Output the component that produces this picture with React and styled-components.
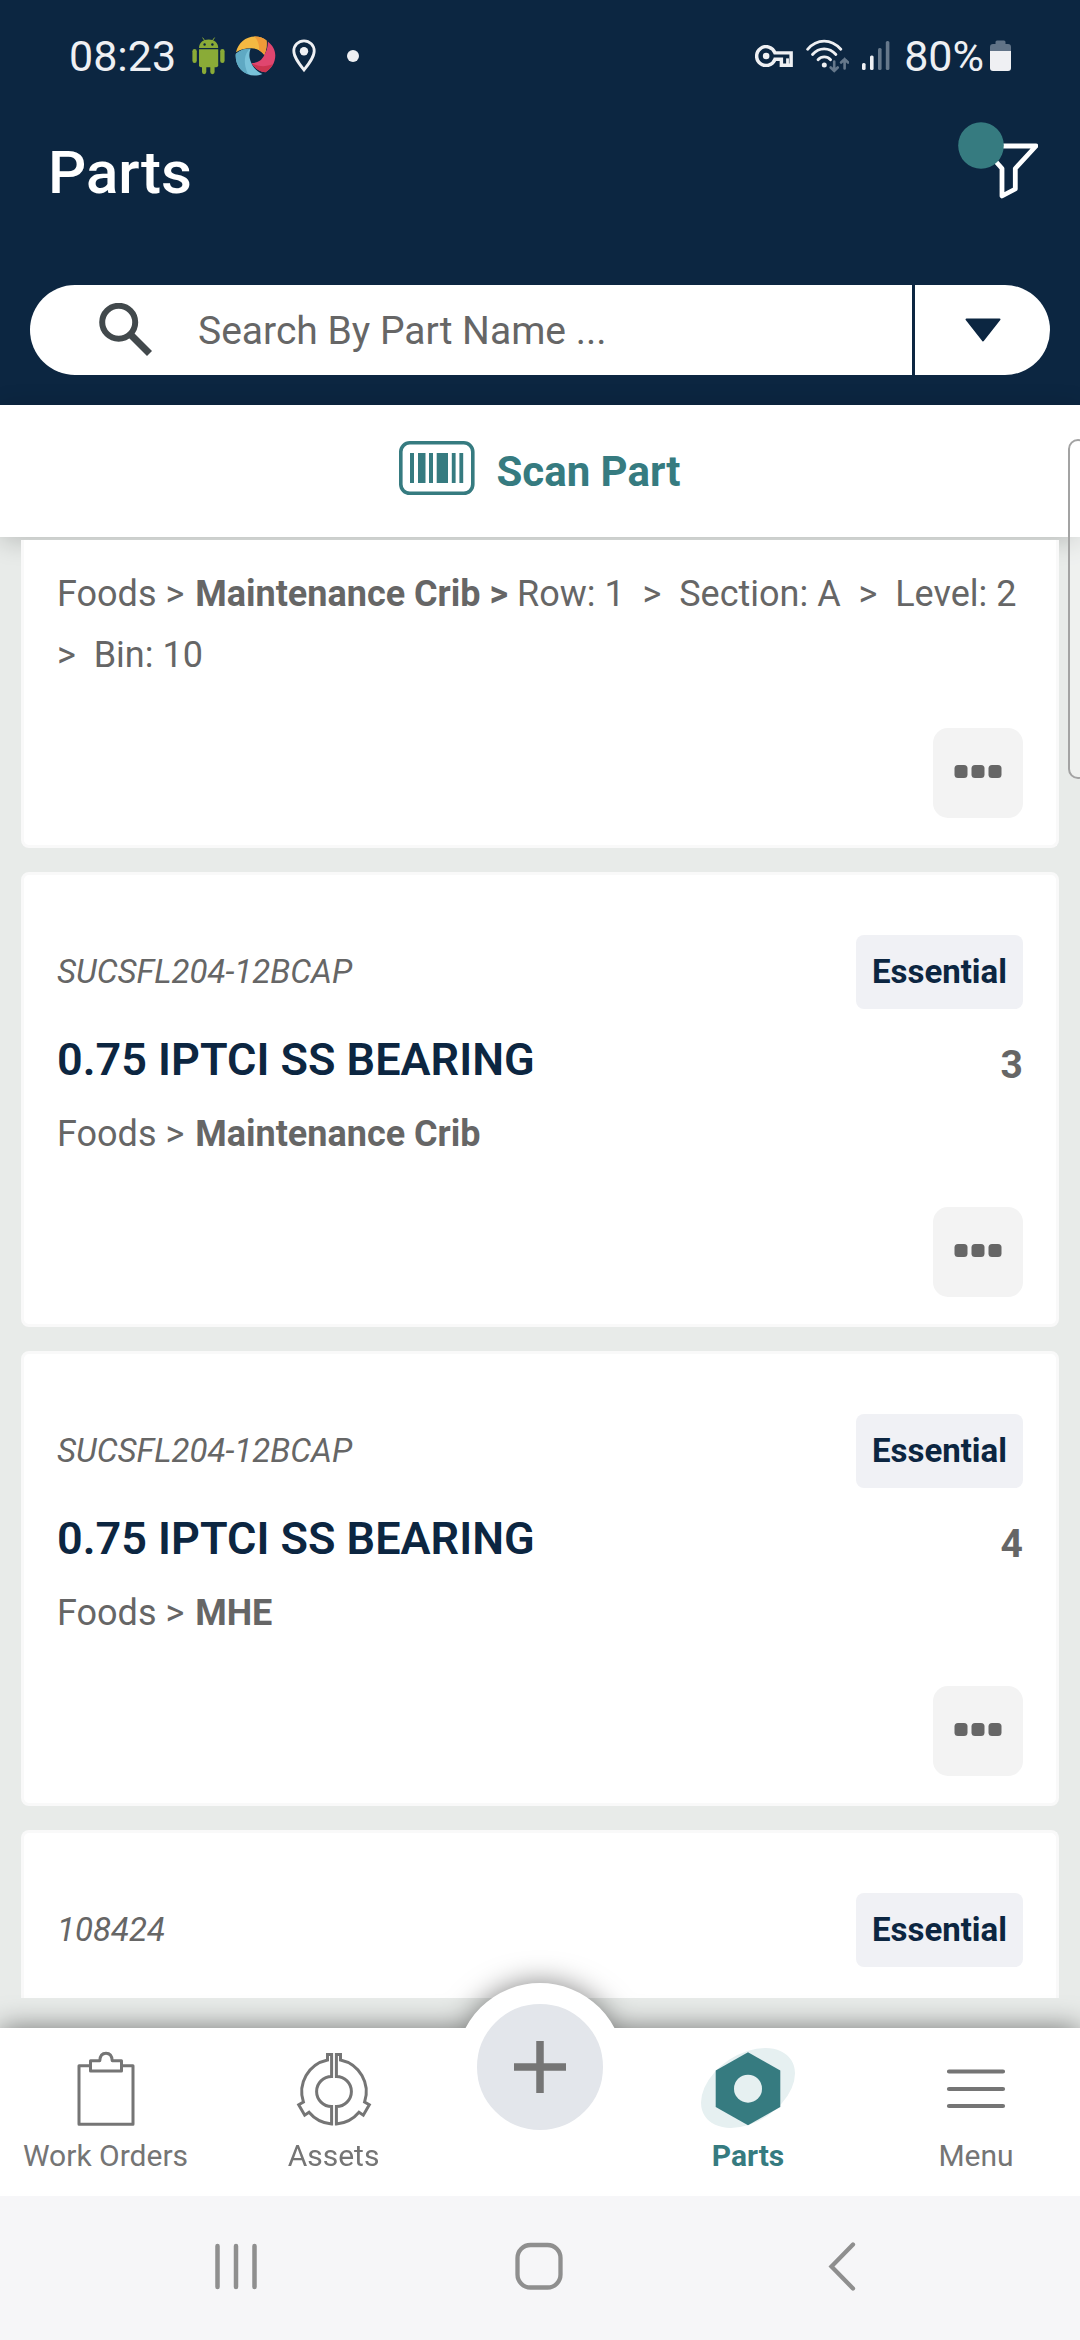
import React from "react";
import styled, { createGlobalStyle, css } from "styled-components";

const navy = "#0c2641";
const teal = "#367b80";
const grey = "#666666";
const tabGrey = "#757575";
const canvas = "#e8ebe9";

const GlobalStyle = createGlobalStyle`
  *, *::before, *::after { box-sizing: border-box; }
  body {
    margin: 0;
    background: ${canvas};
    font-family: Roboto, "Noto Sans", "Liberation Sans", sans-serif;
    color: ${grey};
  }
  button { padding: 0; border: 0; background: none; font: inherit; color: inherit; cursor: pointer; }
  svg { display: block; flex: none; }
`;

const Screen = styled.div`
  position: relative;
  display: flex;
  flex-direction: column;
  height: 100vh;
  overflow: hidden;
`;

const Header = styled.header`
  flex: none;
  padding-bottom: 30px;
  background: ${navy};
  color: #ffffff;
`;

const StatusBar = styled.div`
  display: flex;
  justify-content: space-between;
  height: 112px;
  padding: 0 69px;
  color: #eff0f3;
  font-size: 43px;
  line-height: 50px;
`;

const StatusGroup = styled.div`
  display: flex;
  align-items: center;
  gap: ${({ $gap }) => $gap}px;
`;

const TitleRow = styled.div`
  display: flex;
  align-items: flex-start;
  justify-content: space-between;
  padding: 10px 42px 10px 48px;
`;

const Title = styled.h1`
  margin: 0;
  font-size: 60px;
  font-weight: 500;
  line-height: 102px;
`;

const Search = styled.form`
  display: flex;
  align-items: center;
  height: 90px;
  margin: 51px 30px 0;
  padding-left: 69px;
  overflow: hidden;
  border-radius: 45px;
  background: #ffffff;
`;

const SearchInput = styled.input`
  flex: 1;
  min-width: 0;
  height: 90px;
  margin-left: 45px;
  padding: 2px 0 0;
  border: 0;
  outline: 0;
  background: transparent;
  font-family: inherit;
  font-size: 39px;
  color: ${grey};
  &::placeholder { color: ${grey}; opacity: 1; }
`;

const SearchMenu = styled.button`
  display: grid;
  place-items: center;
  align-self: stretch;
  width: 138px;
  && { border-left: 3px solid ${navy}; }
`;

const ScanBar = styled.div`
  position: relative;
  flex: none;
  background: #ffffff;
  box-shadow: 0 4px 24px rgba(0, 0, 0, 0.2);
`;

const ScanButton = styled.button`
  display: flex;
  align-items: center;
  justify-content: center;
  gap: 21px;
  width: 100%;
  height: 132px;
  && { color: ${teal}; font-size: 42px; font-weight: 700; }
`;

const List = styled.main`
  position: relative;
  flex: 1;
  display: flex;
  flex-direction: column;
  gap: 24px;
  min-height: 0;
  margin: 3px 21px 30px;
  overflow: hidden;
`;

const Card = styled.article`
  flex: none;
  padding: 60px 33px 27px;
  border: 3px solid #f9f9f9;
  border-radius: 8px;
  background: #ffffff;
  ${({ $edge }) => $edge === "top" && css`
    padding-top: 24px;
    border-top: 0;
    border-top-left-radius: 0;
    border-top-right-radius: 0;
  `}
  ${({ $edge }) => $edge === "bottom" && css`
    flex: 1;
    border-bottom: 0;
    border-bottom-left-radius: 0;
    border-bottom-right-radius: 0;
  `}
`;

const CardHead = styled.div`
  display: flex;
  align-items: center;
  justify-content: space-between;
`;

const PartNumber = styled.span`
  font-size: 33px;
  font-style: italic;
  line-height: 40px;
`;

const Badge = styled.span`
  padding: 0 16px;
  border-radius: 8px;
  background: #f0f1f5;
  color: ${navy};
  font-size: 33px;
  font-weight: 700;
  line-height: 74px;
`;

const CardTitleRow = styled.div`
  display: flex;
  align-items: flex-end;
  justify-content: space-between;
  margin: 21px 0 14px;
`;

const PartName = styled.h2`
  margin: 0;
  color: ${navy};
  font-size: 45px;
  font-weight: 600;
  line-height: 60px;
`;

const Count = styled.span`
  font-size: 39px;
  font-weight: 700;
  line-height: 50px;
`;

const Location = styled.p`
  margin: 0;
  font-size: 36px;
  line-height: 61px;
  b { margin-left: 2px; }
`;

const Step = styled.span`
  white-space: pre;
`;

const MoreButton = styled.button`
  display: grid;
  place-items: center;
  width: 90px;
  height: 90px;
  margin: 42px 0 0 auto;
  border-radius: 15px;
  && { background: #f3f3f3; }
`;

const TabBar = styled.nav`
  position: relative;
  flex: none;
  display: grid;
  grid-template-columns: 211fr 245fr 168px 248fr 208fr;
  height: 168px;
  background: #ffffff;
  filter: drop-shadow(0 0 14px rgba(0, 0, 0, 0.5));
`;

const Tab = styled.a`
  display: flex;
  flex-direction: column;
  align-items: center;
  gap: 10px;
  padding-top: 20px;
  color: ${({ $active }) => ($active ? teal : tabGrey)};
  font-size: 30px;
  font-weight: ${({ $active }) => ($active ? 700 : 400)};
  line-height: 36px;
  text-decoration: none;
`;

const AddButton = styled.button`
  display: grid;
  place-items: center;
  width: 168px;
  height: 168px;
  margin-top: -45px;
  border-radius: 50%;
  && { border: 21px solid #ffffff; background: #e3e6eb; }
`;

const SystemNav = styled.div`
  position: relative;
  flex: none;
  display: grid;
  grid-template-columns: repeat(3, 1fr);
  height: 144px;
  padding: 0 87px 4px 84px;
  background: #f6f6f8;
`;

const SystemButton = styled.button`
  display: grid;
  place-items: center;
`;

const EdgeHandle = styled.div`
  position: absolute;
  top: 439px;
  right: -8px;
  width: 20px;
  height: 340px;
  border: 2px solid #a3a3a3;
  border-radius: 14px;
  background: rgba(255, 255, 255, 0.3);
`;

const AndroidIcon = () => (
  <svg width="33" height="38" viewBox="0 0 33 38" fill="#8aab37" aria-hidden="true">
    <rect x="0.4" y="12" width="4.4" height="14" rx="2.2" />
    <rect x="28.2" y="12" width="4.4" height="14" rx="2.2" />
    <path d="M7 12.3h19.2v16a2 2 0 0 1-2 2H9a2 2 0 0 1-2-2z" />
    <path d="M10 28h4.3v7a2.1 2.1 0 0 1-4.3 0zM18.3 28h4.3v7a2.1 2.1 0 0 1-4.3 0z" />
    <path d="M7 11C7 6 11 2.6 16.6 2.6S26.200 6 26.200 11z" />
    <path d="M10.600 0.600l2.800 4M22.600 0.600l-2.800 4" stroke="#8aab37" strokeWidth="1" />
    <circle cx="12.600" cy="7.500" r="1.200" fill={navy} />
    <circle cx="20.400" cy="7.500" r="1.200" fill={navy} />
  </svg>
);

const SwirlIcon = () => (
  <svg width="41" height="40" viewBox="0 0 41 40" aria-hidden="true">
    <path d="M1 16.300C3 7 10.500 0.500 20 0.500c4.500 0 8.500 1.500 11.500 4C32 9 31.500 14.500 29.300 19 25.500 13.800 21 12 15.500 12.300 10 12.300 5 13.500 1 16.300z" fill="#f4b942" />
    <path d="M19 0.600c4.800-.3 9 1.300 12.500 4C32 9 31.500 14.500 29.300 19c-1.500-2-3.300-3.700-5.300-4.800C24.500 9 23 4 19 .6z" fill="#f09a38" />
    <path d="M32.800 5.500C37.500 9 40.300 14 40.300 19.500c0 7-3.800 13.200-9.800 16.700-6-.5-11-4-14-9.200 6 0 10.300-2.500 12.800-8 2.500-4 3.700-8.500 3.500-13.500z" fill="#e0466f" />
    <path d="M38 28a20 20 0 0 1-7.500 8.200c-6-.5-11-4-14-9.200 7 4 14.500 4 21.500 1z" fill="#cc3450" />
    <path d="M15.500 12.700C13.800 18 14 22 16.300 27c2.300 5 6 9 11.200 11C14 43.500.7 34 .7 20c0-1 0-1.500.2-2.300 4-3.700 9.100-5 14.600-5z" fill="#79c2d9" />
    <path d="M15.500 12.700C9 17 8 27 13 38.200 5.500 35.500.5 28.500.7 20c0-1 0-1.500.2-2.300 4-3.700 9.100-5 14.600-5z" fill="#5fa9c3" />
  </svg>
);

const PinIcon = () => (
  <svg width="24" height="34" viewBox="0 0 24 34" fill="none" aria-hidden="true">
    <path d="M12 31C7 24.500 1.800 18 1.800 12a10.200 10.200 0 0 1 20.400 0c0 6-5.200 12.500-10.200 19z" stroke="#eff0f3" strokeWidth="2.800" />
    <circle cx="12" cy="12.300" r="4.200" fill="#eff0f3" />
  </svg>
);

const DotIcon = () => (
  <svg width="42" height="12" viewBox="0 0 42 12" aria-hidden="true">
    <circle cx="21" cy="6" r="6" fill="#eff0f3" />
  </svg>
);

const KeyIcon = () => (
  <svg width="38" height="22" viewBox="0 5 24 14" fill="none" stroke="currentColor" aria-hidden="true">
    <path d="M12.600 10H22.900v7.900h-6.200V14.100h-4.100A6 6 0 1 1 12.600 10z" strokeWidth="2.200" />
    <path d="M20.600 13.500v4" strokeWidth="1.800" />
    <circle cx="7" cy="12" r="2.100" fill="currentColor" stroke="none" />
  </svg>
);

const WifiIcon = () => (
  <svg width="43" height="34" viewBox="0 0 43 34" fill="none" strokeLinecap="round" aria-hidden="true">
    <g stroke="#eff0f3" strokeWidth="2.800">
      <path d="M1.600 10.300C11-.6 25.200-.6 34.800 10.300" />
      <path d="M6.500 15.500c6.500-7.500 16.800-7.500 23.400 0" />
      <path d="M12 20.800c3.600-3.800 9-3.800 12.600 0" />
    </g>
    <circle cx="18.300" cy="26" r="2.500" fill="#eff0f3" />
    <path d="M28.200 22.500V32m-3.500-3.500l3.500 3.500 3.500-3.500M38.600 29.500v-9.500m-3.500 3.500l3.500-3.500 3.500 3.500" stroke="#66788b" strokeWidth="2.600" />
  </svg>
);

const SignalIcon = () => (
  <svg width="29" height="30" viewBox="0 0 29 30" aria-hidden="true">
    <rect x="0" y="22" width="3.600" height="7" rx="1.500" fill="#eff0f3" />
    <rect x="8" y="14.500" width="3.600" height="14.500" rx="1.500" fill="#eff0f3" />
    <rect x="16" y="7" width="3.600" height="22" rx="1.500" fill="#66788b" />
    <rect x="23.800" y="0" width="3.600" height="29" rx="1.500" fill="#66788b" />
  </svg>
);

const BatteryIcon = () => (
  <svg width="21" height="32" viewBox="0 0 21 32" aria-hidden="true">
    <path d="M7 0.500h7a1.500 1.500 0 0 1 1.500 1.500v2H18a3 3 0 0 1 3 3v5H0V7a3 3 0 0 1 3-3h2.500V2A1.500 1.500 0 0 1 7 .5z" fill="#617387" />
    <path d="M0 11h21v17a3 3 0 0 1-3 3H3a3 3 0 0 1-3-3z" fill="#eff0f3" />
  </svg>
);

const FilterIcon = () => (
  <svg width="80" height="77" viewBox="0 0 80 77" fill="none" aria-hidden="true">
    <path d="M24 24h54L57.300 46.500V67L44 74V46.500z" stroke="#ffffff" strokeWidth="4.800" strokeLinejoin="round" />
    <ellipse cx="23" cy="23.500" rx="22.800" ry="23.300" fill={teal} />
  </svg>
);

const SearchIcon = () => (
  <svg width="54" height="54" viewBox="0 0 54 54" fill="none" stroke="#42494c" aria-hidden="true">
    <circle cx="19.700" cy="19.300" r="16.500" strokeWidth="6" />
    <path d="M32 32l18.500 18.500" strokeWidth="7" />
    <path d="M33 36v-3h3" strokeWidth="3" />
  </svg>
);

const CaretIcon = () => (
  <svg width="36" height="24" viewBox="0 0 36 24" aria-hidden="true">
    <path d="M1.500 1.500h33L18 22.500z" fill={navy} stroke={navy} strokeWidth="2" strokeLinejoin="round" />
  </svg>
);

const BarcodeIcon = () => (
  <svg width="76" height="60" viewBox="0 0 76 60" fill={teal} aria-hidden="true">
    <rect x="1.800" y="1.800" width="72" height="50.500" rx="9" fill="none" stroke={teal} strokeWidth="3.600" />
    <path d="M11 12h4v30h-4zM19 12h7.500v30H19zM30 12h4v30h-4zM37.700 12H49v30H37.700zM52.800 12h3.800v30h-3.800zM60.400 12h3.800v30h-3.800z" />
  </svg>
);

const MoreIcon = () => (
  <svg width="48" height="16" viewBox="0 0 48 16" fill={grey} aria-hidden="true">
    <rect x="0.500" y="0" width="13" height="13" rx="3.500" />
    <rect x="17.500" y="0" width="13" height="13" rx="3.500" />
    <rect x="34.500" y="0" width="13" height="13" rx="3.500" />
  </svg>
);

const ClipboardIcon = () => (
  <svg width="62" height="80" viewBox="0 0 62 80" fill="none" stroke={tabGrey} strokeWidth="3" strokeLinejoin="round" aria-hidden="true">
    <path d="M15.500 17.800H4v58.400h54V17.800H46.500" />
    <path d="M15.500 12.700h9.300C25 7.500 27.500 5.200 31 5.200s6 2.300 6.200 7.500h9.300v10.300h-31z" />
  </svg>
);

const halfRing =
  "M2.400 -15V-37H6.500V-31.500A32.500 32.500 0 0 1 30.600 10.500L35.300 13.300 29.300 23.700 25 20.800A32.500 32.500 0 0 1 2.400 32.500V15A15 15 0 0 0 2.400 -15Z";

const AssetsIcon = () => (
  <svg width="80" height="80" viewBox="-40 -43.500 80 80" fill="none" stroke={tabGrey} strokeWidth="3" aria-hidden="true">
    <path d={halfRing} />
    <path d={halfRing} transform="scale(-1 1)" />
  </svg>
);

const PlusIcon = () => (
  <svg width="54" height="54" viewBox="0 0 54 54" stroke={tabGrey} strokeWidth="7.500" aria-hidden="true">
    <path d="M27 1v52M1 27h52" />
  </svg>
);

const PartsIcon = () => (
  <svg width="94" height="80" viewBox="0 0 94 80" aria-hidden="true">
    <ellipse cx="47" cy="40" rx="51.500" ry="34" transform="rotate(-33 47 40)" fill="#e6f0f1" />
    <path d="M47 4.300L79.300 22.500v36.500L47 77.300 14.700 59V22.500z" fill={teal} />
    <circle cx="47" cy="40.700" r="14" fill="#e6f0f1" />
  </svg>
);

const MenuIcon = () => (
  <svg width="60" height="80" viewBox="0 0 60 80" stroke={tabGrey} strokeWidth="4.200" strokeLinecap="round" aria-hidden="true">
    <path d="M3 23.500h54M3 41h54M3 58h54" />
  </svg>
);

const RecentsIcon = () => (
  <svg width="44" height="48" viewBox="0 0 44 48" stroke="#8f8f8f" strokeWidth="4.500" strokeLinecap="round" aria-hidden="true">
    <path d="M3.500 4v41M22 4v41M40.500 4v41" />
  </svg>
);

const HomeIcon = () => (
  <svg width="48" height="48" viewBox="0 0 48 48" fill="none" stroke="#8f8f8f" strokeWidth="4.300" aria-hidden="true">
    <rect x="2.500" y="3" width="43" height="42.500" rx="13" />
  </svg>
);

const BackIcon = () => (
  <svg width="28" height="50" viewBox="0 0 28 50" fill="none" stroke="#8f8f8f" strokeWidth="4.300" strokeLinecap="round" aria-hidden="true">
    <path d="M25 3.500L3.500 25.500 25 47.500" />
  </svg>
);

const parts = [
  { id: 1, number: "SUCSFL204-12BCAP", name: "0.75 IPTCI SS BEARING", count: 3, crib: "Maintenance Crib" },
  { id: 2, number: "SUCSFL204-12BCAP", name: "0.75 IPTCI SS BEARING", count: 4, crib: "MHE" },
];

const CardTop = ({ number }) => (
  <CardHead>
    <PartNumber>{number}</PartNumber>
    <Badge>Essential</Badge>
  </CardHead>
);

const More = () => (
  <MoreButton type="button" aria-label="More actions">
    <MoreIcon />
  </MoreButton>
);

export default function App() {
  return (
    <>
      <GlobalStyle />
      <Screen>
        <Header>
          <StatusBar>
            <StatusGroup $gap={16}>
              <span>08:23</span>
              <StatusGroup $gap={10}>
                <AndroidIcon />
                <SwirlIcon />
              </StatusGroup>
              <PinIcon />
              <DotIcon />
            </StatusGroup>
            <StatusGroup $gap={13}>
              <KeyIcon />
              <WifiIcon />
              <SignalIcon />
              <StatusGroup $gap={6}>
                <span>80%</span>
                <BatteryIcon />
              </StatusGroup>
            </StatusGroup>
          </StatusBar>
          <TitleRow>
            <Title>Parts</Title>
            <button type="button" aria-label="Filter parts">
              <FilterIcon />
            </button>
          </TitleRow>
          <Search role="search" onSubmit={(event) => event.preventDefault()}>
            <SearchIcon />
            <SearchInput type="text" aria-label="Search By Part Name" placeholder="Search By Part Name ..." />
            <SearchMenu type="button" aria-label="Search options">
              <CaretIcon />
            </SearchMenu>
          </Search>
        </Header>

        <ScanBar>
          <ScanButton type="button">
            <BarcodeIcon />
            Scan Part
          </ScanButton>
        </ScanBar>

        <List>
          <Card $edge="top">
            <Location>
              Foods &gt; <b>Maintenance Crib &gt;</b> <Step>{"Row: 1 "}</Step>{" "}
              <Step>{">  Section: A "}</Step> <Step>{">  Level: 2"}</Step>{" "}
              <Step>{">  Bin: 10"}</Step>
            </Location>
            <More />
          </Card>
          {parts.map((part) => (
            <Card key={part.id}>
              <CardTop number={part.number} />
              <CardTitleRow>
                <PartName>{part.name}</PartName>
                <Count>{part.count}</Count>
              </CardTitleRow>
              <Location>
                Foods &gt; <b>{part.crib}</b>
              </Location>
              <More />
            </Card>
          ))}
          <Card $edge="bottom">
            <CardTop number="108424" />
          </Card>
        </List>

        <TabBar aria-label="Main">
          <Tab href="#work-orders">
            <ClipboardIcon />
            Work Orders
          </Tab>
          <Tab href="#assets">
            <AssetsIcon />
            Assets
          </Tab>
          <AddButton type="button" aria-label="Add">
            <PlusIcon />
          </AddButton>
          <Tab href="#parts" $active aria-current="page">
            <PartsIcon />
            Parts
          </Tab>
          <Tab href="#menu">
            <MenuIcon />
            Menu
          </Tab>
        </TabBar>

        <SystemNav>
          <SystemButton type="button" aria-label="Recent apps">
            <RecentsIcon />
          </SystemButton>
          <SystemButton type="button" aria-label="Home">
            <HomeIcon />
          </SystemButton>
          <SystemButton type="button" aria-label="Back">
            <BackIcon />
          </SystemButton>
        </SystemNav>

        <EdgeHandle />
      </Screen>
    </>
  );
}
